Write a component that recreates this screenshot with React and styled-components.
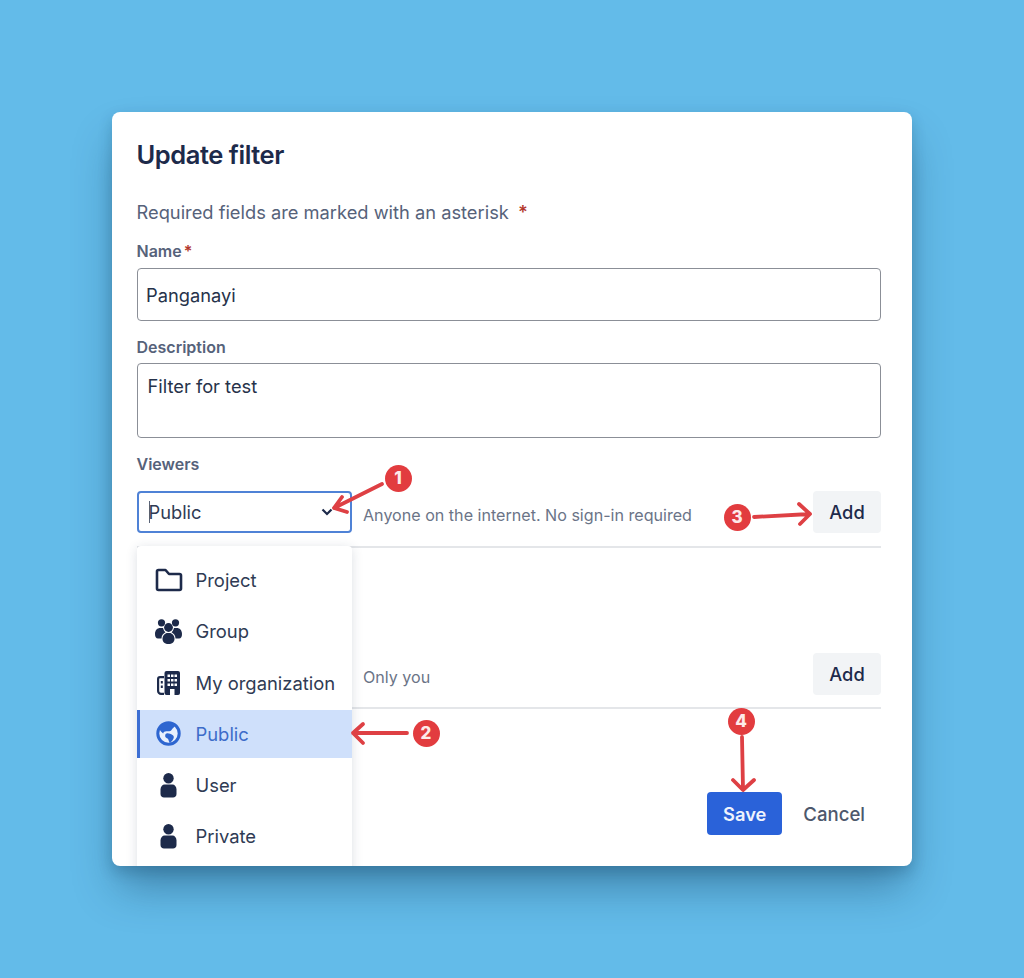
import React from "react";
import styled, { createGlobalStyle } from "styled-components";

const GlobalStyle = createGlobalStyle`
  html, body {
    margin: 0;
    padding: 0;
    background: #63bbe9;
    font-family: Inter, "Noto Sans", sans-serif;
  }
`;

const Stage = styled.div`
  position: relative;
  width: 1024px;
  height: 978px;
  overflow: hidden;
  padding-top: 112px;
  box-sizing: border-box;
`;

const Modal = styled.div`
  position: relative;
  width: 800px;
  height: 754px;
  margin: 0 auto;
  padding: 0 31px 0 24.5px;
  box-sizing: border-box;
  background: #fff;
  border-radius: 8px;
  box-shadow: 0 26px 44px -6px rgba(15, 55, 85, 0.42), 0 6px 14px rgba(15, 55, 85, 0.22);
  overflow: hidden;
`;

const Title = styled.h1`
  margin: 0;
  padding-top: 27px;
  font-size: 25.5px;
  line-height: 32px;
  font-weight: 600;
  letter-spacing: -0.45px;
  color: #1d2a4a;
`;

const Hint = styled.p`
  margin: 29px 0 0;
  font-size: 18.3px;
  line-height: 24px;
  color: #56627a;
`;

const Star = styled.span`
  color: #b3382c;
  font-weight: 600;
  margin-left: ${(p) => p.$gap || 2}px;
`;

const Label = styled.label`
  display: block;
  margin-top: ${(p) => p.$top}px;
  font-size: 16px;
  line-height: 20px;
  font-weight: 600;
  color: #56627a;
`;

const TextBox = styled.div`
  margin-top: ${(p) => p.$top}px;
  height: ${(p) => p.$height}px;
  padding: ${(p) => p.$pad};
  box-sizing: border-box;
  border: 1px solid #8b8f97;
  border-radius: 4px;
  font-size: 18.3px;
  line-height: 24px;
  color: #26324a;
`;

const ViewerRow = styled.div`
  display: flex;
  align-items: center;
  height: 42px;
  margin-top: ${(p) => p.$top}px;
`;

const Select = styled.div`
  display: flex;
  align-items: center;
  width: 215px;
  height: 42px;
  padding: 0 17px 0 10px;
  box-sizing: border-box;
  border: 2.5px solid #4f82d6;
  border-radius: 4px;
  font-size: 18.3px;
  color: #2f3b54;
`;

const Caret = styled.span`
  width: 1px;
  height: 22px;
  margin-right: -1px;
  background: #5a6478;
`;

const Chevron = styled.svg`
  margin-left: auto;
`;

const SelectSlot = styled.div`
  width: 215px;
  height: 42px;
`;

const RowNote = styled.span`
  margin: 5px 0 0 11.5px;
  font-size: 16.1px;
  color: #6b7487;
`;

const AddButton = styled.button`
  width: 68px;
  height: 42px;
  margin-left: auto;
  padding: 0;
  border: none;
  border-radius: 4px;
  background: #f2f4f6;
  font: 500 18.3px Inter, sans-serif;
  color: #1d2a4a;
`;

const Divider = styled.div`
  height: 2px;
  margin-top: ${(p) => p.$top}px;
  background: #e4e6e9;
`;

const Footer = styled.div`
  display: flex;
  align-items: center;
  justify-content: flex-end;
  margin-top: 83px;
  padding-right: 16px;
`;

const SaveButton = styled.button`
  width: 75px;
  height: 43px;
  padding: 0;
  border: none;
  border-radius: 4px;
  background: #2a62d9;
  font: 600 18.3px Inter, sans-serif;
  color: #eef3fd;
`;

const CancelButton = styled.button`
  margin-left: 21px;
  padding: 0;
  border: none;
  background: none;
  font: 500 18.6px Inter, sans-serif;
  color: #4d586c;
`;

const Menu = styled.ul`
  position: absolute;
  top: 434px;
  left: 24.5px;
  width: 215.5px;
  height: 330px;
  margin: 0;
  padding: 10px 0 0;
  list-style: none;
  display: flex;
  flex-direction: column;
  gap: 3.3px;
  background: #fff;
  border-radius: 4px;
  box-shadow: 0 2px 12px rgba(40, 55, 85, 0.16);
`;

const MenuItem = styled.li`
  display: flex;
  flex: none;
  align-items: center;
  height: 48px;
  padding-left: ${(p) => (p.$active ? 15 : 18)}px;
  border-left: ${(p) => (p.$active ? "3px solid #3d6fd3" : "none")};
  background: ${(p) => (p.$active ? "#cfe0fb" : "transparent")};
  font-size: 18.4px;
  color: ${(p) => (p.$active ? "#3d6cc9" : "#2f3b54")};
`;

const MenuIcon = styled.span`
  display: flex;
  align-items: center;
  justify-content: center;
  width: 28px;
  height: 28px;
  margin-right: 13px;
`;

const Arrows = styled.svg`
  position: absolute;
  top: 0;
  left: 0;
  pointer-events: none;
`;

const Badge = styled.span`
  position: absolute;
  left: ${(p) => p.$x - 13.5}px;
  top: ${(p) => p.$y - 13.5}px;
  display: flex;
  align-items: center;
  justify-content: center;
  width: 27px;
  height: 27px;
  border-radius: 50%;
  background: #e23c3f;
  font-size: 17px;
  font-weight: 800;
  color: #fdeaea;
`;

const FolderIcon = () => (
  <svg width="28" height="26" viewBox="0 0 28 26" fill="none" stroke="#1d2a4a" strokeWidth="2.6" strokeLinejoin="round">
    <path d="M2 4.500a1.500 1.500 0 0 1 1.500-1.500h7l3.500 4h10.500a1.500 1.500 0 0 1 1.500 1.500v13a1.500 1.500 0 0 1-1.500 1.500h-21a1.500 1.500 0 0 1-1.500-1.500z" />
  </svg>
);

const GroupIcon = () => (
  <svg width="27" height="25" viewBox="0 0 27 25" fill="#1d2a4a">
    <circle cx="6.500" cy="3.800" r="3.600" />
    <circle cx="20.500" cy="3.800" r="3.600" />
    <circle cx="13.500" cy="8.500" r="4.400" />
    <path d="M0 15c0-4 2.500-6 5-6h3c.5 2 1.300 3.300 2.500 4.300C8 14.500 6.500 17 6.500 19.500H3c-2 0-3-1.700-3-4.500z" />
    <path d="M27 15c0-4-2.500-6-5-6h-3c-.5 2-1.300 3.300-2.500 4.300 2.500 1.200 4 3.700 4 6.200H24c2 0 3-1.700 3-4.500z" />
    <path d="M7.500 20c0-3.500 2.500-6 5-6h2c2.500 0 5 2.500 5 6 0 3-2.500 5-6 5s-6-2-6-5z" />
  </svg>
);

const BuildingIcon = () => (
  <svg width="23" height="24" viewBox="0 0 23 24">
    <rect x="7.500" y="0" width="15.500" height="24" rx="2" fill="#1d2a4a" />
    <path fill="#fff" d="M10.500 3.500h2.500v2.500h-2.500zM14 3.500h2.500v2.500H14zM17.500 3.500H20v2.500h-2.500zM10.500 8h2.500v2.500h-2.500zM14 8h2.500v2.500H14zM17.500 8H20v2.500h-2.500zM10.500 12.500h2.500V15h-2.500zM14 12.500h2.500V15H14zM17.500 12.500H20V15h-2.500zM13 18h4.500v6H13z" />
    <path fill="none" stroke="#1d2a4a" strokeWidth="2.200" d="M7 6.100H3a1.900 1.900 0 0 0-1.900 1.900v12a2.900 2.900 0 0 0 2.900 2.900h3" />
    <path fill="#1d2a4a" d="M3.800 10h2v2.500h-2zM3.800 14.500h2V17h-2z" />
  </svg>
);

const GlobeIcon = () => (
  <svg width="25" height="25" viewBox="0 0 25 25" fill="#2e66d0">
    <circle cx="12.500" cy="12.500" r="10.700" fill="#e8f0fd" stroke="#2e66d0" strokeWidth="3" />
    <path d="M7 3.500C10 1.500 16 1.500 19 4.500c-.5 2-2.500 2.800-3.500 4.500-1 1.500-3 1.500-4.500 1.200-1.800-.3-3.500.5-3.800 2.300C5.800 11.500 4 9.500 3.500 8 4 6 5 4.800 7 3.500z" />
    <path d="M10.500 12.500c2-.5 4 .5 6 1.500 1.500.7 1.700 2.500.8 4-1 1.700-2 2.700-3.300 4-1-.5-1.300-2.500-1.800-3.700-.5-1.300-3-1.300-3-3.300 0-1.300.4-2.200 1.300-2.500z" />
  </svg>
);

const PersonIcon = () => (
  <svg width="17" height="25" viewBox="0 0 17 25" fill="#1d2a4a">
    <circle cx="8.500" cy="5.300" r="5.200" />
    <path d="M0.500 17c0-3 2-5 4-5h8c2 0 4 2 4 5v4.500c0 2-1.500 3.500-3.500 3.500h-9c-2 0-3.500-1.500-3.500-3.500z" transform="translate(0 -0.500)" />
  </svg>
);

const options = [
  { label: "Project", icon: <FolderIcon /> },
  { label: "Group", icon: <GroupIcon /> },
  { label: "My organization", icon: <BuildingIcon /> },
  { label: "Public", icon: <GlobeIcon />, active: true },
  { label: "User", icon: <PersonIcon /> },
  { label: "Private", icon: <PersonIcon /> },
];

const badges = [
  { n: 1, x: 398, y: 478 },
  { n: 2, x: 426, y: 733 },
  { n: 3, x: 737, y: 517 },
  { n: 4, x: 741, y: 721 },
];

const arrowPaths = [
  "M382 484L334 508M342 497L334 508L347 512",
  "M407 733L353 733M363 724L353 733L363 743",
  "M754 517L810 514M799 504L810 514L800 524",
  "M742 737L743 789M733 780L743 790L754 780",
];

export default function App() {
  return (
    <Stage>
      <GlobalStyle />
      <Modal>
        <Title>Update filter</Title>
        <Hint>
          Required fields are marked with an asterisk <Star $gap={4}>*</Star>
        </Hint>

        <Label $top={17}>
          Name<Star>*</Star>
        </Label>
        <TextBox $top={7} $height={53} $pad="14px 8.5px">
          Panganayi
        </TextBox>

        <Label $top={16}>Description</Label>
        <TextBox $top={6} $height={75} $pad="10px 10px">
          Filter for test
        </TextBox>

        <Label $top={16}>Viewers</Label>
        <ViewerRow $top={17}>
          <Select>
            <Caret />
            Public
            <Chevron width="12" height="8" viewBox="0 0 12 8" fill="none" stroke="#1d2a4a" strokeWidth="2.2">
              <path d="M1.500 1.500L6 6l4.500-4.500" />
            </Chevron>
          </Select>
          <RowNote>Anyone on the internet. No sign-in required</RowNote>
          <AddButton>Add</AddButton>
        </ViewerRow>
        <Divider $top={13} />

        <ViewerRow $top={105}>
          <SelectSlot />
          <RowNote>Only you</RowNote>
          <AddButton>Add</AddButton>
        </ViewerRow>
        <Divider $top={12} />

        <Footer>
          <SaveButton>Save</SaveButton>
          <CancelButton>Cancel</CancelButton>
        </Footer>

        <Menu>
          {options.map((o) => (
            <MenuItem key={o.label} $active={o.active}>
              <MenuIcon>{o.icon}</MenuIcon>
              {o.label}
            </MenuItem>
          ))}
        </Menu>
      </Modal>

      <Arrows width="1024" height="978" fill="none" stroke="#de4044" strokeWidth="3.8" strokeLinecap="round" strokeLinejoin="round">
        {arrowPaths.map((d) => (
          <path key={d} d={d} />
        ))}
      </Arrows>
      {badges.map((b) => (
        <Badge key={b.n} $x={b.x} $y={b.y}>
          {b.n}
        </Badge>
      ))}
    </Stage>
  );
}
